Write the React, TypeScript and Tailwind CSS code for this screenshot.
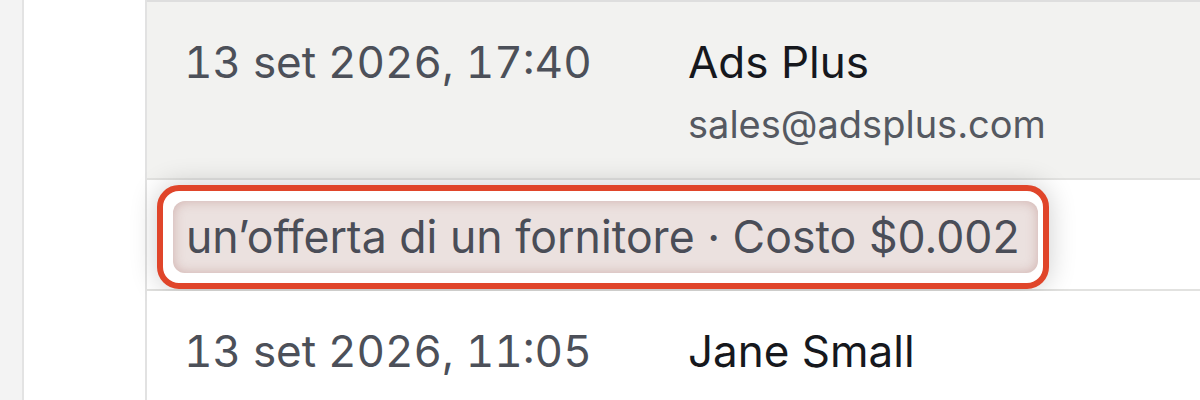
import React from 'react';

const Row = ({ date, name, email, shaded }: { date: string; name: string; email?: string; shaded?: boolean }) => (
  <div className={`flex pl-[37px] pt-[36px] ${shaded ? 'h-[176px] bg-[#f2f2f0]' : 'h-[120px] bg-white'}`}>
    <div className="w-[504px] text-[44px] leading-[48px] tabular-nums text-[#4c5059]">{date}</div>
    <div className="flex flex-col">
      <span className="text-[44px] leading-[48px] text-[#16181d]">{name}</span>
      {email && <span className="mt-[14px] text-[38px] leading-[48px] text-[#555961]">{email}</span>}
    </div>
  </div>
);

const App: React.FC = () => {
  return (
    <div className="flex h-[400px] w-[1200px] overflow-hidden bg-white font-['Inter',sans-serif]">
      <div className="w-[24px] shrink-0 border-r-2 border-[#e3e3e3] bg-[#f3f3f3]" />
      <div className="w-[121px] shrink-0 bg-white" />
      <div className="flex flex-1 flex-col border-l-2 border-[#e2e2e2]">
        <div className="border-t-2 border-[#dedede]">
          <Row date="13 set 2026, 17:40" name="Ads Plus" email="sales@adsplus.com" shaded />
        </div>
        <div className="flex h-[125px] items-start border-y-2 border-[#e2e2e0] bg-white pl-[10px] pt-[5px]">
          <div className="rounded-[22px] border-[6px] border-[#e0452a] bg-white py-[10px] pl-[10px] pr-[5px] shadow-[0_0_28px_rgba(0,0,0,0.2)]">
            <div className="rounded-[12px] bg-[#ebe1df] pl-[13px] pr-[18px] text-[44.6px] leading-[72px] text-[#4a4d57] shadow-[inset_0_0_12px_rgba(170,105,100,0.4)]">
              un’offerta di un fornitore · Costo $0.002
            </div>
          </div>
        </div>
        <Row date="13 set 2026, 11:05" name="Jane Small" />
      </div>
    </div>
  );
};

export default App;
